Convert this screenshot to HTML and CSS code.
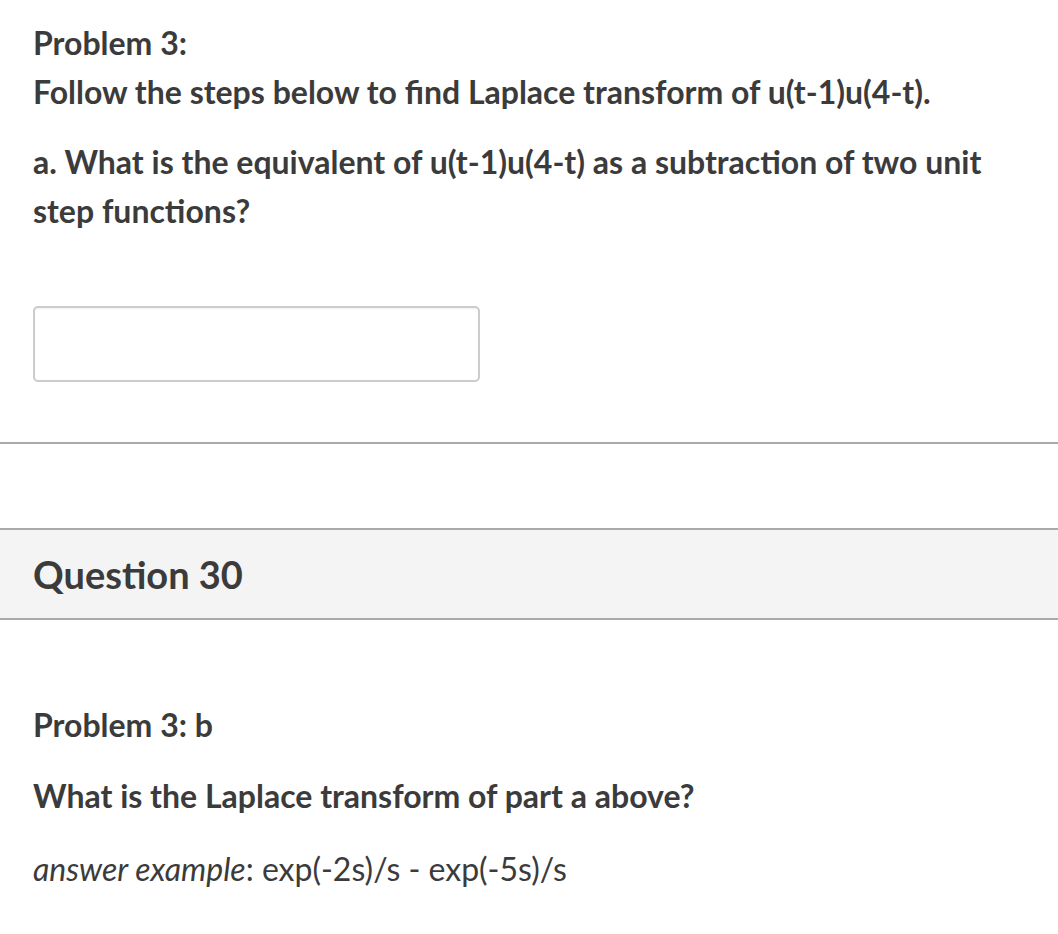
FILE: index.html
```html
<!DOCTYPE html>
<html lang="en">
<head>
<meta charset="utf-8">
<title>Quiz</title>
<link rel="stylesheet" href="styles.css">
</head>
<body>
<div class="quiz">
  <section class="question">
    <div class="question-text">
      <p class="line">Problem 3:</p>
      <p class="line">Follow the steps below to find Laplace transform of u(t-1)u(4-t).</p>
      <p class="line part">a. What is the equivalent of u(t-1)u(4-t) as a subtraction of two unit step functions?</p>
    </div>
    <div class="answers">
      <input class="answer-input" type="text" aria-label="Answer">
    </div>
  </section>

  <section class="question next">
    <header class="question-header">
      <h2 class="question-name">Question 30</h2>
    </header>
    <div class="question-text lower">
      <p class="line">Problem 3: b</p>
      <p class="line gap">What is the Laplace transform of part a above?</p>
      <p class="line gap2 example"><em>answer example</em>: exp(-2s)/s - exp(-5s)/s</p>
    </div>
  </section>
</div>
</body>
</html>
```
FILE: styles.css
```css
html, body {
  margin: 0;
  padding: 0;
  background: #ffffff;
}

body {
  font-family: "Lato", "Noto Sans", sans-serif;
  color: #3b3b3b;
}

.quiz {
  width: 1058px;
}

.question-text {
  padding: 18px 33px 0 33px;
}

.line {
  margin: 0;
  font-size: 32px;
  line-height: 49px;
  font-weight: 700;
}

.part {
  margin-top: 21px;
}

.answers {
  padding: 71px 33px 60px 33px;
  border-bottom: 2px solid #aaaaaa;
}

.answer-input {
  display: block;
  box-sizing: border-box;
  width: 447px;
  height: 76px;
  margin: 0;
  padding: 0 10px;
  border: 2px solid #cccccc;
  border-radius: 5px;
  background: #ffffff;
  box-shadow: inset 0 1px 2px rgba(0, 0, 0, 0.06);
  font: inherit;
  outline: none;
}

.next {
  margin-top: 84px;
}

.question-header {
  display: flex;
  align-items: center;
  height: 88px;
  padding: 0 33px;
  background: #f4f4f4;
  border-top: 2px solid #aaaaaa;
  border-bottom: 2px solid #aaaaaa;
}

.question-name {
  margin: 0;
  font-size: 38px;
  line-height: 44px;
  font-weight: 700;
}

.lower {
  padding-top: 80px;
}

.gap {
  margin-top: 22px;
}

.gap2 {
  margin-top: 24px;
}

.example {
  font-weight: 400;
}

.example em {
  font-style: italic;
}
```
